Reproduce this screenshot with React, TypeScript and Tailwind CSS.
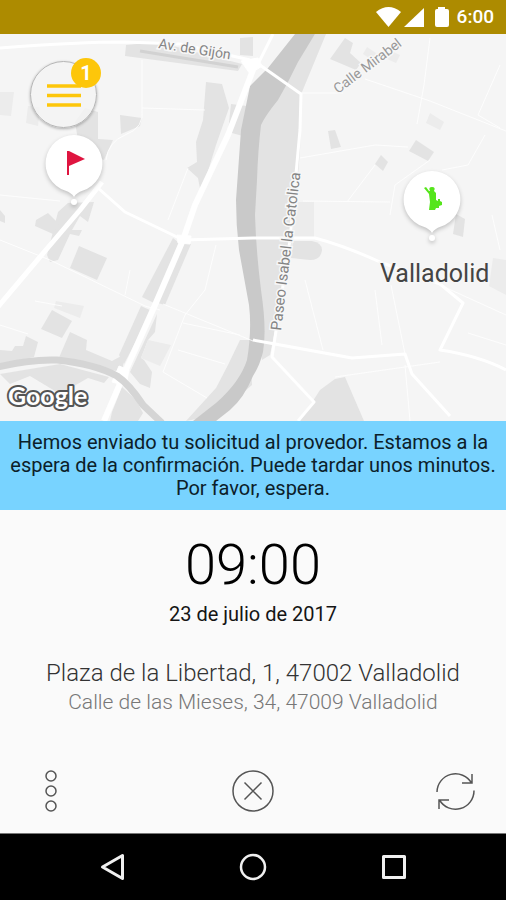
import type { ReactNode } from "react";

const buildings = [
  "M126 45 L158 42 L242 64 L238 71 L125 56Z",
  "M240 38 L253 37 L253 56 L240 55Z",
  "M206 82 L222 84 L229 108 L216 145 L201 194 L198 178 L187 168 L197 162 L196 142 L203 120Z",
  "M231 104 L247 106 L243 136 L228 132Z",
  "M120 115 L142 118 L140 126 L121 134Z",
  "M75 122 L85 108 L98 112 L98 139 L113 140 L104 160 L80 152Z",
  "M58 212 L68 203 L94 202 L88 222 L80 216 L72 230 L82 230 L79 236 L70 234 L58 260 L50 262 L47 255Z",
  "M36 220 L48 213 L59 224 L53 234 L35 226Z",
  "M0 210 L5 216 L5 223 L0 221Z",
  "M79 246 L107 258 L97 280 L70 268Z",
  "M52 310 L72 321 L62 338 L41 329Z",
  "M70 332 L87 340 L86 350 L112 361 L125 354 L122 372 L100 368 L58 360Z",
  "M0 350 L12 351 L15 346 L23 346 L26 336 L38 342 L34 357 L0 364Z",
  "M173 238 L179 243 L154 303 L142 297Z",
  "M141 306 L152 311 L124 364 L119 355Z",
  "M184 242 L191 244 L165 305 L158 303Z",
  "M157 314 L155 332 L148 340 L141 358 L144 360 L152 372 L150 388 L140 384 L130 372Z",
  "M0 374 L60 364 L109 377 L104 383 L88 378 L60 394 L30 376 L10 384Z",
  "M112 412 L122 387 L136 400 L143 413 L138 421 L110 421Z",
  "M345 38 L353 43 L350 53 L361 63 L356 70 L330 59Z",
  "M328 131 L335 130 L341 147 L331 149Z",
  "M381 155 L388 162 L383 171 L375 164Z",
  "M416 140 L434 152 L428 161 L409 151Z",
  "M456 214 L465 219 L463 237 L453 234Z",
  "M300 421 L320 390 L335 379 L345 377 L364 421Z",
];

const faintBuildings = [
  "M0 92 L14 92 L11 116 L0 115Z",
  "M28 106 L40 107 L38 126 L26 123Z",
  "M56 301 L84 306 L80 318 L54 308Z",
  "M367 47 L376 53 L372 60 L363 54Z",
  "M391 51 L400 55 L396 63 L387 59Z",
  "M430 113 L444 122 L440 130 L426 123Z",
  "M493 258 L506 260 L506 295 L489 286Z",
  "M297 202 L314 202 L314 237 L292 237Z",
  "M148 340 L171 345 L160 366 L141 358Z",
];

const minorRoads = [
  "M0 195 L60 201",
  "M0 240 L50 260 L145 306 L160 310",
  "M0 325 L28 334 M35 301 L62 306",
  "M142 60 L142 108 L205 110 M142 108 Q145 128 125 135 Q108 142 106 160",
  "M188 168 L168 220",
  "M130 270 L125 295",
  "M163 304 L253 341",
  "M216 245 L205 290 L185 315 L163 372 L207 398",
  "M183 323 L240 335 M178 350 L225 364",
  "M300 93 L343 93",
  "M365 79 L430 101 L506 131",
  "M430 38 L424 85 L417 124",
  "M500 65 L478 115 L500 128",
  "M300 158 L375 145 L408 147",
  "M375 165 L347 202 M430 160 L395 185 L390 215",
  "M303 201 L390 202",
  "M485 135 L468 165 L442 170",
  "M305 280 L323 350 M375 290 L382 345 M391 285 L405 354",
  "M440 285 L506 315 M468 333 L506 345",
  "M335 377 L440 362 M405 365 L410 421",
  "M492 215 L500 250",
];

const mainRoads = [
  "M0 48 Q80 42 125 42 L180 44 L250 60",
  "M255 66 L228 135 L195 205 L183 240",
  "M258 64 L273 34",
  "M98 188 L125 212 L175 236 L183 240 L253 238 L315 238 Q345 246 380 262 L440 284 L463 303 L440 350 Q480 356 506 370",
  "M257 63 L301 94 L300 130 L295 185 L290 240 L272 357 L314 402 L298 421",
  "M253 340 L275 344 L352 358 L405 354 L412 374 L450 416",
];

function CityMap() {
  return (
    <svg
      className="block h-full w-full"
      viewBox="0 34 506 387"
      preserveAspectRatio="xMidYMid slice"
      role="img"
      aria-label="Valladolid"
    >
      <rect y="34" width="506" height="387" fill="#f5f5f5" />

      <g fill="#e3e3e3">
        <path d="M315 34 L326 34 L302 92 L300 150 L296 200 L291 250 L270 355 L262 360 L250 200 L260 110Z" />
        <path d="M240 340 L250 340 L252 385 L217 415 L186 421 L216 388 L228 365Z" />
        <path d="M293 241 H312 Q322 243 322 250 Q321 260 310 260 L291 258Z" />
        {buildings.map((d) => (
          <path key={d} d={d} />
        ))}
      </g>
      <g fill="#ececec">
        {faintBuildings.map((d) => (
          <path key={d} d={d} />
        ))}
      </g>

      <path
        d="M295 34 L315 34 L298 62 L288 82 L278 100 Q265 116 261 125 Q258 150 257 180 L255 215 Q256 250 261 290 Q267 330 263 352 Q260 365 253 376 Q244 398 230 410 L216 421 L193 421 L216 403 Q240 382 247 360 Q252 330 249 305 L239 250 Q236 225 236 200 L241 130 L250 86 L268 68Z"
        fill="#c9c9c9"
      />

      <g fill="none" stroke="#fff" strokeLinejoin="round">
        <g strokeWidth="1" opacity="0.8">
          {minorRoads.map((d) => (
            <path key={d} d={d} />
          ))}
        </g>
        <g strokeWidth="3">
          {mainRoads.map((d) => (
            <path key={d} d={d} />
          ))}
        </g>
        <path d="M-4 309 L45 251 L80 210 L102 182" strokeWidth="5" />
        <path d="M253 70 L228 135 L195 205 L183 240 L155 305 L125 372 L104 421" strokeWidth="6" />
        <path
          d="M241 61 L258 58 L262 66 L250 74Z M177 235 L191 236 L190 244 L178 243Z M119 366 L129 370 L126 386 L112 382Z"
          strokeWidth="1"
          fill="#fff"
        />
      </g>
      <path
        d="M-2 367 Q30 359 57 360 Q95 364 117 376 Q129 384 143 405 L162 423"
        fill="none"
        stroke="#d5d5d5"
        strokeWidth="7"
      />
      <path d="M140 51 L238 67" stroke="#d2d2d2" strokeWidth="3" />

      <g fontFamily="Roboto, sans-serif" fill="#848484" stroke="#f7f7f7" strokeWidth="3" paintOrder="stroke">
        <text x="158" y="48" fontSize="14" transform="rotate(9 158 48)">Av. de Gijón</text>
        <text x="338" y="94" fontSize="14" fill="#999" transform="rotate(-37 338 94)">Calle Mirabel</text>
        <text x="281" y="331" fontSize="15" transform="rotate(-83 281 331)">Paseo Isabel la Catolica</text>
        <text x="380" y="282" fontSize="25" fill="#444">Valladolid</text>
      </g>
      <text
        x="8"
        y="405"
        fontFamily="Lato, sans-serif"
        fontSize="25"
        fontWeight="700"
        fill="#fff"
        stroke="#555"
        strokeWidth="4"
        strokeLinejoin="round"
        paintOrder="stroke"
      >
        Google
      </text>
    </svg>
  );
}

function Pin({ children }: { children: ReactNode }) {
  return (
    <svg className="h-[76px] w-16 drop-shadow-[0_2px_2px_rgba(0,0,0,0.22)]" viewBox="0 0 64 76" aria-hidden="true">
      <path d="M32 2 a28.5 28.5 0 0 1 9 55.5 Q34 60 32 64 Q30 60 23 57.5 A28.5 28.5 0 0 1 32 2Z" fill="#fff" />
      <circle cx="32" cy="69" r="3" fill="#fff" />
      {children}
    </svg>
  );
}

function StatusBar() {
  return (
    <header className="flex h-[34px] items-center justify-end bg-[#ad8b00] pr-3 text-white">
      <svg className="h-5 w-20" viewBox="0 0 80 20" fill="currentColor" aria-hidden="true">
        <path d="M0 5 Q12.500 -5 25 5 L12.500 20Z" />
        <path d="M48 1 V20 H28Z" />
        <path d="M62 2 V0 H69 V2 H71 Q73 2 73 4 V18 Q73 20 71 20 H61 Q59 20 59 18 V4 Q59 2 61 2Z" />
      </svg>
      <span className="ml-px text-[19px] font-medium">6:00</span>
    </header>
  );
}

export default function App() {
  return (
    <div className="flex min-h-screen flex-col bg-[#fafafa] font-[Roboto,sans-serif]">
      <StatusBar />

      <section className="relative h-[387px] overflow-hidden">
        <CityMap />
        <button
          type="button"
          aria-label="Menú"
          className="absolute top-[27px] left-[30px] flex size-[67px] items-center justify-center rounded-full border border-[#b5b5b5] bg-[#f4f4f4]/80 shadow-[0_1px_3px_rgba(0,0,0,0.3)]"
        >
          <svg className="h-6 w-[34px]" viewBox="0 0 34 24" stroke="#fdc60a" strokeWidth="3.5" aria-hidden="true">
            <path d="M0 3 H34 M0 12.500 H34 M0 22 H34" />
          </svg>
          <span className="absolute -top-1 left-10 flex size-[30px] items-center justify-center rounded-full bg-[#fdc60a] text-xl font-bold text-white">
            1
          </span>
        </button>
        <div className="absolute top-[99px] left-[42px]">
          <Pin>
            <path d="M25 18 H27 L43 26 L27 33 V42 H25Z" fill="#df1540" />
          </Pin>
        </div>
        <div className="absolute top-[135px] left-[400px]">
          <Pin>
            <path
              d="M24 19 L26 18 L29 22 H30 Q28 18 32 18 Q36 18 34 22 L36 24 V31 L38 32 V30 H40 V32 L42 33 V36 L39 37 V39 H36 L35 41 H29 L30 33 L29 25Z"
              fill="#55e51b"
            />
          </Pin>
        </div>
      </section>

      <p className="bg-[#78d3ff] px-2 py-[10px] text-center text-[20px] leading-[23px] text-[#0c2029]">
        Hemos enviado tu solicitud al provedor. Estamos a la espera de la confirmación. Puede tardar unos minutos. Por
        favor, espera.
      </p>

      <main className="flex flex-1 flex-col text-center">
        <h1 className="mt-6 text-[56px] leading-[62px] font-light text-black">09:00</h1>
        <p className="mt-1.5 text-[20px] leading-6 text-[#151515]">23 de julio de 2017</p>
        <p className="mt-8 text-[24px] leading-[30px] font-light text-[#333]">Plaza de la Libertad, 1, 47002 Valladolid</p>
        <p className="text-[21px] leading-7 font-light text-[#777]">Calle de las Mieses, 34, 47009 Valladolid</p>

        <div className="mt-auto mb-5 flex items-center justify-between px-[29px] text-[#555]">
          <button type="button" aria-label="Más opciones">
            <svg className="size-11" viewBox="0 0 44 44" fill="none" stroke="currentColor" strokeWidth="1.5">
              <circle cx="22" cy="7" r="5" />
              <circle cx="22" cy="22" r="5" />
              <circle cx="22" cy="37" r="5" />
            </svg>
          </button>
          <button type="button" aria-label="Cancelar">
            <svg className="size-11" viewBox="0 0 44 44" fill="none" stroke="currentColor" strokeWidth="1.5">
              <circle cx="22" cy="22" r="20" />
              <path d="M13.500 13.500 L30.500 30.500 M30.500 13.500 L13.500 30.500" />
            </svg>
          </button>
          <button type="button" aria-label="Actualizar">
            <svg className="size-11" viewBox="0 0 44 44" fill="none" stroke="currentColor" strokeWidth="1.5">
              <path d="M4 23 A18.500 18.500 0 0 1 38.500 14 M39 5 V14 H29" />
              <path d="M41 21.500 A18.500 18.500 0 0 1 6.500 31 M6 40 V31 H16" />
            </svg>
          </button>
        </div>
      </main>

      <nav className="flex h-[67px] items-center justify-center gap-[113px] border-t border-[#777] bg-black text-[#f0f0f0]">
        <button type="button" aria-label="Atrás">
          <svg className="size-7" viewBox="0 0 28 28" fill="none" stroke="currentColor" strokeWidth="3" strokeLinejoin="round">
            <path d="M4.500 14 L24.500 2.500 V25.500Z" />
          </svg>
        </button>
        <button type="button" aria-label="Inicio">
          <svg className="size-7" viewBox="0 0 28 28" fill="none" stroke="currentColor" strokeWidth="2.5">
            <circle cx="14" cy="14" r="12" />
          </svg>
        </button>
        <button type="button" aria-label="Recientes">
          <svg className="size-7" viewBox="0 0 28 28" fill="none" stroke="currentColor" strokeWidth="3" strokeLinejoin="round">
            <path d="M3.500 3.500 H24.500 V24.500 H3.500Z" />
          </svg>
        </button>
      </nav>
    </div>
  );
}
